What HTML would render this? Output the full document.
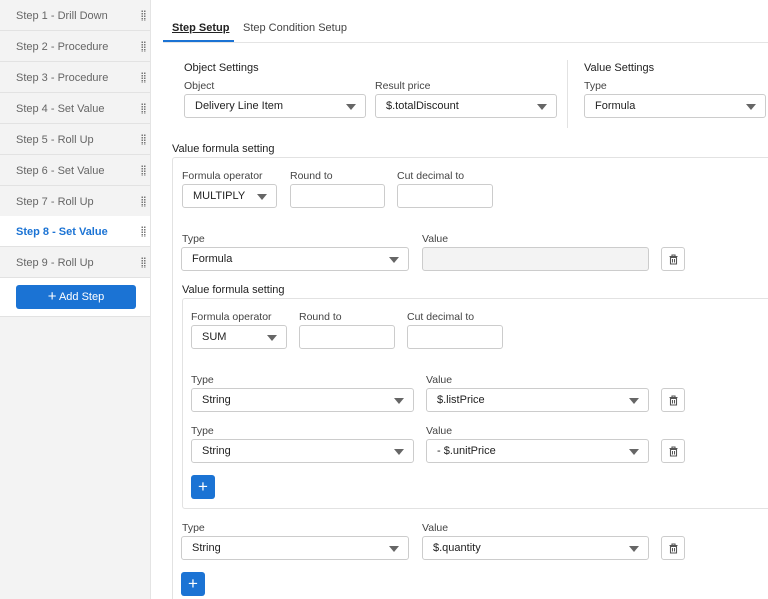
<!DOCTYPE html>
<html style="overflow:hidden;width:768px;height:599px"><head><style>
*{box-sizing:border-box;margin:0;padding:0}
body{width:768px;height:599px;overflow:hidden;background:#fff;font-family:"Liberation Sans",sans-serif;font-size:11px;color:#222;position:relative}
.a{position:absolute}
.side{left:0;top:0;width:151px;height:599px;background:#f3f3f3;border-right:1px solid #e4e4e4}
.it{position:absolute;left:0;width:150px;height:31px;border-bottom:1px solid #e2e2e2;color:#666;padding-left:16px;line-height:32px;font-size:11px}
.it.on{background:#fff;color:#1b73d4;font-weight:bold}
.dr{position:absolute;right:4px;top:10px;width:5px;height:11px;background-image:radial-gradient(circle,#777 0.8px,transparent 1px);background-size:2.5px 2.5px}
.lbl{position:absolute;color:#444;font-size:10.5px}
.sel,.inp{position:absolute;height:24px;border:1px solid #ccc;border-radius:3px;background:#fff;padding-left:10px;line-height:22px;font-size:11px;color:#222}
.sel::after{content:"";position:absolute;right:9px;top:9px;border-left:5px solid transparent;border-right:5px solid transparent;border-top:6px solid #666}
.tr{position:absolute;width:24px;height:24px;border:1px solid #ccc;border-radius:3px;background:#fff}
.tr svg{position:absolute;left:6px;top:6px}
.pl{position:absolute;width:24px;height:24px;background:#1b73d4;border-radius:3px;color:#fff;text-align:center;line-height:23px;font-size:17px}
</style></head><body>
<div class="a side">
<div class="it" style="top:0">Step 1 - Drill Down<div class="dr"></div></div>
<div class="it" style="top:31px">Step 2 - Procedure<div class="dr"></div></div>
<div class="it" style="top:62px">Step 3 - Procedure<div class="dr"></div></div>
<div class="it" style="top:93px">Step 4 - Set Value<div class="dr"></div></div>
<div class="it" style="top:124px">Step 5 - Roll Up<div class="dr"></div></div>
<div class="it" style="top:155px">Step 6 - Set Value<div class="dr"></div></div>
<div class="it" style="top:186px">Step 7 - Roll Up<div class="dr"></div></div>
<div class="it on" style="top:216px">Step 8 - Set Value<div class="dr"></div></div>
<div class="it" style="top:247px">Step 9 - Roll Up<div class="dr"></div></div>
<div class="a" style="left:0;top:278px;width:150px;height:39px;background:#fff;border-bottom:1px solid #e2e2e2"></div>
<div class="a" style="left:16px;top:285px;width:120px;height:24px;background:#1b73d4;border-radius:3px;color:#fff;text-align:center;line-height:24px;font-size:11px"><span style="font-size:15px;vertical-align:-1px">+</span> Add Step</div>
</div>

<div class="a" style="left:172px;top:22px;font-weight:bold;text-decoration:underline;font-size:11px">Step Setup</div>
<div class="a" style="left:243px;top:22px;color:#444;font-size:11px">Step Condition Setup</div>
<div class="a" style="left:163px;top:42px;width:605px;height:1px;background:#e4e4e4"></div>
<div class="a" style="left:163px;top:40px;width:71px;height:2px;background:#1b73d4"></div>

<div class="lbl" style="left:184px;top:62px;font-size:11px;color:#222">Object Settings</div>
<div class="lbl" style="left:184px;top:80px">Object</div>
<div class="sel" style="left:184px;top:94px;width:182px">Delivery Line Item</div>
<div class="lbl" style="left:375px;top:80px">Result price</div>
<div class="sel" style="left:375px;top:94px;width:182px">$.totalDiscount</div>
<div class="a" style="left:567px;top:60px;width:1px;height:68px;background:#e2e2e2"></div>
<div class="lbl" style="left:584px;top:62px;font-size:11px;color:#222">Value Settings</div>
<div class="lbl" style="left:584px;top:80px">Type</div>
<div class="sel" style="left:584px;top:94px;width:182px">Formula</div>

<div class="lbl" style="left:172px;top:143px;font-size:11px;color:#222">Value formula setting</div>
<div class="a" style="left:172px;top:157px;width:620px;height:442px;border:1px solid #e2e2e2;border-bottom:none;border-radius:3px 3px 0 0"></div>
<div class="lbl" style="left:182px;top:170px">Formula operator</div>
<div class="sel" style="left:182px;top:184px;width:95px">MULTIPLY</div>
<div class="lbl" style="left:290px;top:170px">Round to</div>
<div class="inp" style="left:290px;top:184px;width:95px"></div>
<div class="lbl" style="left:397px;top:170px">Cut decimal to</div>
<div class="inp" style="left:397px;top:184px;width:96px"></div>

<div class="lbl" style="left:182px;top:233px">Type</div>
<div class="sel" style="left:181px;top:247px;width:228px">Formula</div>
<div class="lbl" style="left:422px;top:233px">Value</div>
<div class="inp" style="left:422px;top:247px;width:227px;background:#f3f3f3"></div>
<div class="tr" style="left:661px;top:247px"><svg width="11" height="11" viewBox="0 0 11 11"><path d="M1.5 2.5h8M4 2.5V1h3v1.5M2.5 3.5h6v6.5h-6z" fill="none" stroke="#555" stroke-width="1.1"/><path d="M4.5 5v3.5M6.5 5v3.5" stroke="#555"/></svg></div>

<div class="lbl" style="left:182px;top:284px;font-size:11px;color:#222">Value formula setting</div>
<div class="a" style="left:182px;top:298px;width:600px;height:211px;border:1px solid #e2e2e2;border-radius:3px"></div>
<div class="lbl" style="left:191px;top:311px">Formula operator</div>
<div class="sel" style="left:191px;top:325px;width:96px">SUM</div>
<div class="lbl" style="left:299px;top:311px">Round to</div>
<div class="inp" style="left:299px;top:325px;width:96px"></div>
<div class="lbl" style="left:407px;top:311px">Cut decimal to</div>
<div class="inp" style="left:407px;top:325px;width:96px"></div>

<div class="lbl" style="left:191px;top:374px">Type</div>
<div class="sel" style="left:191px;top:388px;width:223px">String</div>
<div class="lbl" style="left:426px;top:374px">Value</div>
<div class="sel" style="left:426px;top:388px;width:223px">$.listPrice</div>
<div class="tr" style="left:661px;top:388px"><svg width="11" height="11" viewBox="0 0 11 11"><path d="M1.5 2.5h8M4 2.5V1h3v1.5M2.5 3.5h6v6.5h-6z" fill="none" stroke="#555" stroke-width="1.1"/><path d="M4.5 5v3.5M6.5 5v3.5" stroke="#555"/></svg></div>

<div class="lbl" style="left:191px;top:425px">Type</div>
<div class="sel" style="left:191px;top:439px;width:223px">String</div>
<div class="lbl" style="left:426px;top:425px">Value</div>
<div class="sel" style="left:426px;top:439px;width:223px">- $.unitPrice</div>
<div class="tr" style="left:661px;top:439px"><svg width="11" height="11" viewBox="0 0 11 11"><path d="M1.5 2.5h8M4 2.5V1h3v1.5M2.5 3.5h6v6.5h-6z" fill="none" stroke="#555" stroke-width="1.1"/><path d="M4.5 5v3.5M6.5 5v3.5" stroke="#555"/></svg></div>
<div class="pl" style="left:191px;top:475px">+</div>

<div class="lbl" style="left:182px;top:522px">Type</div>
<div class="sel" style="left:181px;top:536px;width:228px">String</div>
<div class="lbl" style="left:422px;top:522px">Value</div>
<div class="sel" style="left:422px;top:536px;width:227px">$.quantity</div>
<div class="tr" style="left:661px;top:536px"><svg width="11" height="11" viewBox="0 0 11 11"><path d="M1.5 2.5h8M4 2.5V1h3v1.5M2.5 3.5h6v6.5h-6z" fill="none" stroke="#555" stroke-width="1.1"/><path d="M4.5 5v3.5M6.5 5v3.5" stroke="#555"/></svg></div>
<div class="pl" style="left:181px;top:572px">+</div>
</body></html>
